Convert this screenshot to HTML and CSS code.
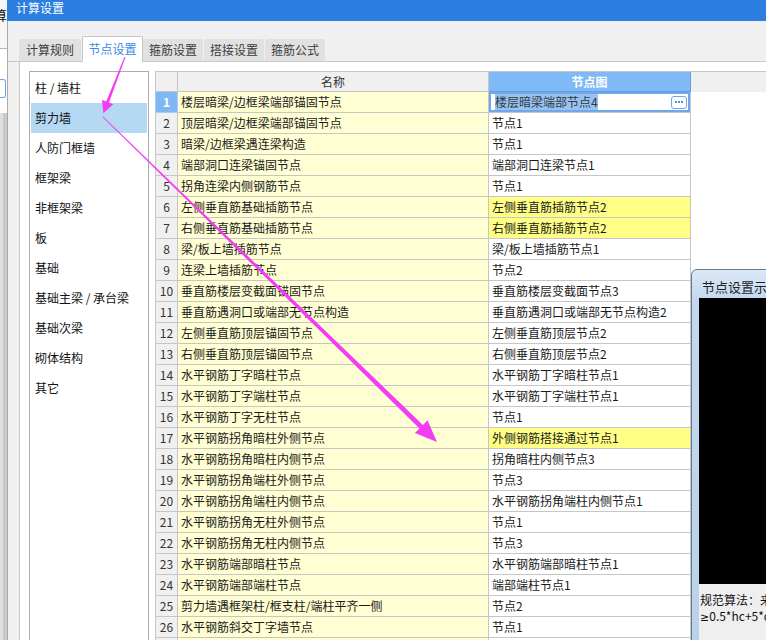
FILE: index.html
```html
<!DOCTYPE html>
<html lang="zh-CN">
<head>
<meta charset="utf-8">
<title>计算设置</title>
<link rel="stylesheet" href="styles.css">
</head>
<body>
<div class="screen">
  <div class="bgwin">
    <div class="bg-top"><span class="bg-char">算</span></div>
    <div class="bg-mid"><div class="bg-input"></div></div>
    <div class="bg-low"></div>
  </div>
  <div class="win">
    <div class="titlebar">计算设置</div>
    <div class="winbody">
      <div class="tabs">
        <div class="tab t1">计算规则</div>
        <div class="tab t2 active">节点设置</div>
        <div class="tab t3">箍筋设置</div>
        <div class="tab t4">搭接设置</div>
        <div class="tab t5">箍筋公式</div>
      </div>
      <div class="pane">
        <ul class="cats">
          <li>柱 / 墙柱</li>
          <li class="sel">剪力墙</li>
          <li>人防门框墙</li>
          <li>框架梁</li>
          <li>非框架梁</li>
          <li>板</li>
          <li>基础</li>
          <li>基础主梁 / 承台梁</li>
          <li>基础次梁</li>
          <li>砌体结构</li>
          <li>其它</li>
        </ul>
        <div class="grid">
          <div class="row head">
            <div class="c num"></div>
            <div class="c name">名称</div>
            <div class="c node">节点图</div>
            <div class="fill"></div>
          </div>
          <div class="row">
            <div class="c num cur">1</div>
            <div class="c name">楼层暗梁/边框梁端部锚固节点</div>
            <div class="c node edit"><span class="seltext">楼层暗梁端部节点4</span><span class="dots"><i></i><i></i><i></i></span></div>
            <div class="fill"></div>
          </div>
          <div class="row"><div class="c num">2</div><div class="c name">顶层暗梁/边框梁端部锚固节点</div><div class="c node">节点1</div><div class="fill"></div></div>
          <div class="row"><div class="c num">3</div><div class="c name">暗梁/边框梁遇连梁构造</div><div class="c node">节点1</div><div class="fill"></div></div>
          <div class="row"><div class="c num">4</div><div class="c name">端部洞口连梁锚固节点</div><div class="c node">端部洞口连梁节点1</div><div class="fill"></div></div>
          <div class="row"><div class="c num">5</div><div class="c name">拐角连梁内侧钢筋节点</div><div class="c node">节点1</div><div class="fill"></div></div>
          <div class="row"><div class="c num">6</div><div class="c name">左侧垂直筋基础插筋节点</div><div class="c node hl">左侧垂直筋插筋节点2</div><div class="fill"></div></div>
          <div class="row"><div class="c num">7</div><div class="c name">右侧垂直筋基础插筋节点</div><div class="c node hl">右侧垂直筋插筋节点2</div><div class="fill"></div></div>
          <div class="row"><div class="c num">8</div><div class="c name">梁/板上墙插筋节点</div><div class="c node">梁/板上墙插筋节点1</div><div class="fill"></div></div>
          <div class="row"><div class="c num">9</div><div class="c name">连梁上墙插筋节点</div><div class="c node">节点2</div><div class="fill"></div></div>
          <div class="row"><div class="c num">10</div><div class="c name">垂直筋楼层变截面锚固节点</div><div class="c node">垂直筋楼层变截面节点3</div><div class="fill"></div></div>
          <div class="row"><div class="c num">11</div><div class="c name">垂直筋遇洞口或端部无节点构造</div><div class="c node">垂直筋遇洞口或端部无节点构造2</div><div class="fill"></div></div>
          <div class="row"><div class="c num">12</div><div class="c name">左侧垂直筋顶层锚固节点</div><div class="c node">左侧垂直筋顶层节点2</div><div class="fill"></div></div>
          <div class="row"><div class="c num">13</div><div class="c name">右侧垂直筋顶层锚固节点</div><div class="c node">右侧垂直筋顶层节点2</div><div class="fill"></div></div>
          <div class="row"><div class="c num">14</div><div class="c name">水平钢筋丁字暗柱节点</div><div class="c node">水平钢筋丁字暗柱节点1</div><div class="fill"></div></div>
          <div class="row"><div class="c num">15</div><div class="c name">水平钢筋丁字端柱节点</div><div class="c node">水平钢筋丁字端柱节点1</div><div class="fill"></div></div>
          <div class="row"><div class="c num">16</div><div class="c name">水平钢筋丁字无柱节点</div><div class="c node">节点1</div><div class="fill"></div></div>
          <div class="row"><div class="c num">17</div><div class="c name">水平钢筋拐角暗柱外侧节点</div><div class="c node hl">外侧钢筋搭接通过节点1</div><div class="fill"></div></div>
          <div class="row"><div class="c num">18</div><div class="c name">水平钢筋拐角暗柱内侧节点</div><div class="c node">拐角暗柱内侧节点3</div><div class="fill"></div></div>
          <div class="row"><div class="c num">19</div><div class="c name">水平钢筋拐角端柱外侧节点</div><div class="c node">节点3</div><div class="fill"></div></div>
          <div class="row"><div class="c num">20</div><div class="c name">水平钢筋拐角端柱内侧节点</div><div class="c node">水平钢筋拐角端柱内侧节点1</div><div class="fill"></div></div>
          <div class="row"><div class="c num">21</div><div class="c name">水平钢筋拐角无柱外侧节点</div><div class="c node">节点1</div><div class="fill"></div></div>
          <div class="row"><div class="c num">22</div><div class="c name">水平钢筋拐角无柱内侧节点</div><div class="c node">节点3</div><div class="fill"></div></div>
          <div class="row"><div class="c num">23</div><div class="c name">水平钢筋端部暗柱节点</div><div class="c node">水平钢筋端部暗柱节点1</div><div class="fill"></div></div>
          <div class="row"><div class="c num">24</div><div class="c name">水平钢筋端部端柱节点</div><div class="c node">端部端柱节点1</div><div class="fill"></div></div>
          <div class="row"><div class="c num">25</div><div class="c name">剪力墙遇框架柱/框支柱/端柱平齐一侧</div><div class="c node">节点2</div><div class="fill"></div></div>
          <div class="row"><div class="c num">26</div><div class="c name">水平钢筋斜交丁字墙节点</div><div class="c node">节点1</div><div class="fill"></div></div>
          <div class="row"><div class="c num"></div><div class="c name"></div><div class="c node"></div><div class="fill"></div></div>
        </div>
      </div>
    </div>
  </div>

  <div class="popup">
    <div class="ptitle">节点设置示意图</div>
    <div class="pimg"></div>
    <div class="ptext">
      <div class="pline">规范算法：来自规范</div>
      <div class="pline"><span class="ge">≥</span>0.5*hc+5*d</div>
    </div>
  </div>

  <svg class="arrows" viewBox="0 0 766 640" width="766" height="640">
    <polygon points="125.47,57.18 109.0,102.54 113.2,104.16 103.3,113.3 102.0,99.84 106.2,101.46 124.53,56.82"/>
    <polygon points="103.35,116.64 422.94,424.91 427.5,420.3 437,442 414.9,433.1 419.46,428.49 102.65,117.36"/>
  </svg>
</div>
</body>
</html>
```

FILE: styles.css
```css
* {
  box-sizing: border-box;
  margin: 0;
  padding: 0;
}

html, body {
  width: 766px;
  height: 640px;
  overflow: hidden;
}

body {
  font-family: "Noto Sans CJK SC", "Noto Sans", sans-serif;
  font-size: 12px;
  color: #1a1a1a;
  background: #f0f0f0;
}

.screen {
  position: relative;
  display: flex;
  width: 766px;
  height: 640px;
  overflow: hidden;
}

/* background window strip at the far left */
.bgwin {
  width: 7px;
  flex: none;
  display: flex;
  flex-direction: column;
  overflow: hidden;
  background: #fff;
}

.bg-top {
  height: 49px;
  flex: none;
  background: #f6f6f6;
  border-bottom: 1px solid #b4b4b4;
  font-size: 13px;
  line-height: 16px;
  padding-top: 7px;
  white-space: nowrap;
}

.bg-char {
  display: block;
  margin-left: -6px;
  color: #111;
}

.bg-mid {
  height: 64px;
  flex: none;
  background: #fff;
  padding-top: 30px;
}

.bg-input {
  width: 6px;
  height: 19px;
  border: 1px solid #6fa3e0;
  border-left: none;
  border-radius: 0 3px 3px 0;
  background: #fff;
}

.bg-low {
  flex: 1;
  background: linear-gradient(to right, #dedede 0 3px, #c8c8c8 3px);
}

/* main window */
.win {
  flex: 1;
  display: flex;
  flex-direction: column;
  min-width: 0;
}

.titlebar {
  height: 21px;
  flex: none;
  background: #2c7fe0;
  color: #fff;
  font-size: 12px;
  line-height: 16px;
  padding-left: 9px;
}

.winbody {
  flex: 1;
  display: flex;
  flex-direction: column;
  min-height: 0;
  border-left: 1px solid #a9a9a9;
  background: #f0f0f0;
}

.tabs {
  height: 41px;
  flex: none;
  display: flex;
  align-items: flex-end;
  padding-left: 11px;
  border-bottom: 1px solid #c8c8c8;
}

.tab {
  height: 22px;
  line-height: 22px;
  text-align: center;
  background: #e1e1e1;
  color: #3c3c3c;
  border-radius: 2px 2px 0 0;
  white-space: nowrap;
}

.t1 { width: 62px; margin-right: 1px; }
.t2 { width: 61px; }
.t3 { width: 60px; margin-right: 1px; }
.t4 { width: 60px; margin-right: 1px; }
.t5 { width: 60px; }

.tab.active {
  height: 26px;
  margin-bottom: -1px;
  line-height: 24px;
  background: #fff;
  border: 1px solid #c6c6c6;
  border-bottom: none;
  color: #3a8ae4;
}

.pane {
  flex: 1;
  min-height: 0;
  margin-left: 11px;
  border-left: 1px solid #c8c8c8;
  background: #fff;
  display: flex;
  align-items: flex-start;
  gap: 6px;
  padding: 9px 0 0 9px;
  overflow: hidden;
}

.cats {
  width: 120px;
  height: 600px;
  flex: none;
  list-style: none;
  border: 1px solid #acacac;
  padding: 1px 0 0 1px;
}

.cats li {
  height: 30px;
  line-height: 30px;
  padding-left: 4px;
  margin-right: 1px;
  white-space: nowrap;
  color: #111;
}

.cats li.sel {
  background: #b5d8f3;
}

/* data grid */
.grid {
  width: 611px;
  flex: none;
  border-top: 1px solid #c6c6c6;
}

.row {
  display: flex;
  height: 21px;
}

.row.head {
  height: 20px;
}

.c {
  height: 100%;
  flex: none;
  border-right: 1px solid #c6c6c6;
  border-bottom: 1px solid #c6c6c6;
  line-height: 19px;
  white-space: nowrap;
  overflow: hidden;
}

.row:not(.head) .c {
  line-height: 20px;
}

.num {
  width: 23px;
  border-left: 1px solid #c6c6c6;
  background: #f0f0f0;
  color: #333;
  text-align: center;
}

.num.cur {
  background: #7fb7f3;
  border-color: #a9cdf5;
  color: #fff;
  font-weight: bold;
}

.name {
  width: 311px;
  background: #ffffd3;
  padding-left: 3px;
}

.node {
  width: 202px;
  background: #fff;
  padding-left: 3px;
}

.node.hl {
  background: #ffff86;
}

.head .c {
  background: #f0f0f0;
  text-align: center;
  color: #333;
  padding-left: 0;
}

.head .node {
  background: #80baf6;
  border-color: #62a1ea;
  color: #fff;
  font-weight: bold;
}

.fill {
  flex: 1;
  height: 100%;
}

.head .fill {
  background: #f0f0f0;
}

.node.edit {
  display: flex;
  align-items: center;
  padding-left: 6px;
  padding-right: 3px;
  box-shadow: inset 0 0 0 2px #6ea7ea;
}

.seltext {
  background: #9ac2ef;
  color: #2f3a48;
  line-height: 16px;
  height: 16px;
}

.dots {
  margin-left: auto;
  width: 16px;
  height: 13px;
  border: 1px solid #6ea7ea;
  border-radius: 3px;
  background: #fff;
  display: flex;
  align-items: center;
  justify-content: center;
  gap: 1px;
}

.dots i {
  display: block;
  width: 2px;
  height: 2px;
  background: #4a8fe0;
}

/* floating preview window */
.popup {
  position: absolute;
  left: 691px;
  top: 269px;
  width: 140px;
  height: 390px;
  border: 1px solid #6a7888;
  border-radius: 6px 0 0 0;
  background: linear-gradient(to bottom, #dbe8f6, #c2d8ef 30px, #b9d1ea);
  padding-left: 7px;
  display: flex;
  flex-direction: column;
}

.ptitle {
  height: 28px;
  flex: none;
  padding: 9px 0 0 3px;
  font-size: 13px;
  line-height: 16px;
  color: #1e1e1e;
  white-space: nowrap;
}

.pimg {
  height: 286px;
  flex: none;
  background: #000;
}

.ptext {
  flex: 1;
  background: #efefef;
  padding: 8px 0 0 1px;
  font-size: 12px;
  color: #111;
}

.pline {
  height: 16px;
  line-height: 16px;
  white-space: nowrap;
}

.ge {
  font-family: "DejaVu Sans", "Liberation Sans", sans-serif;
  font-size: 11px;
}

.arrows {
  position: absolute;
  left: 0;
  top: 0;
  width: 766px;
  height: 640px;
  pointer-events: none;
  fill: #f23df2;
}
```
